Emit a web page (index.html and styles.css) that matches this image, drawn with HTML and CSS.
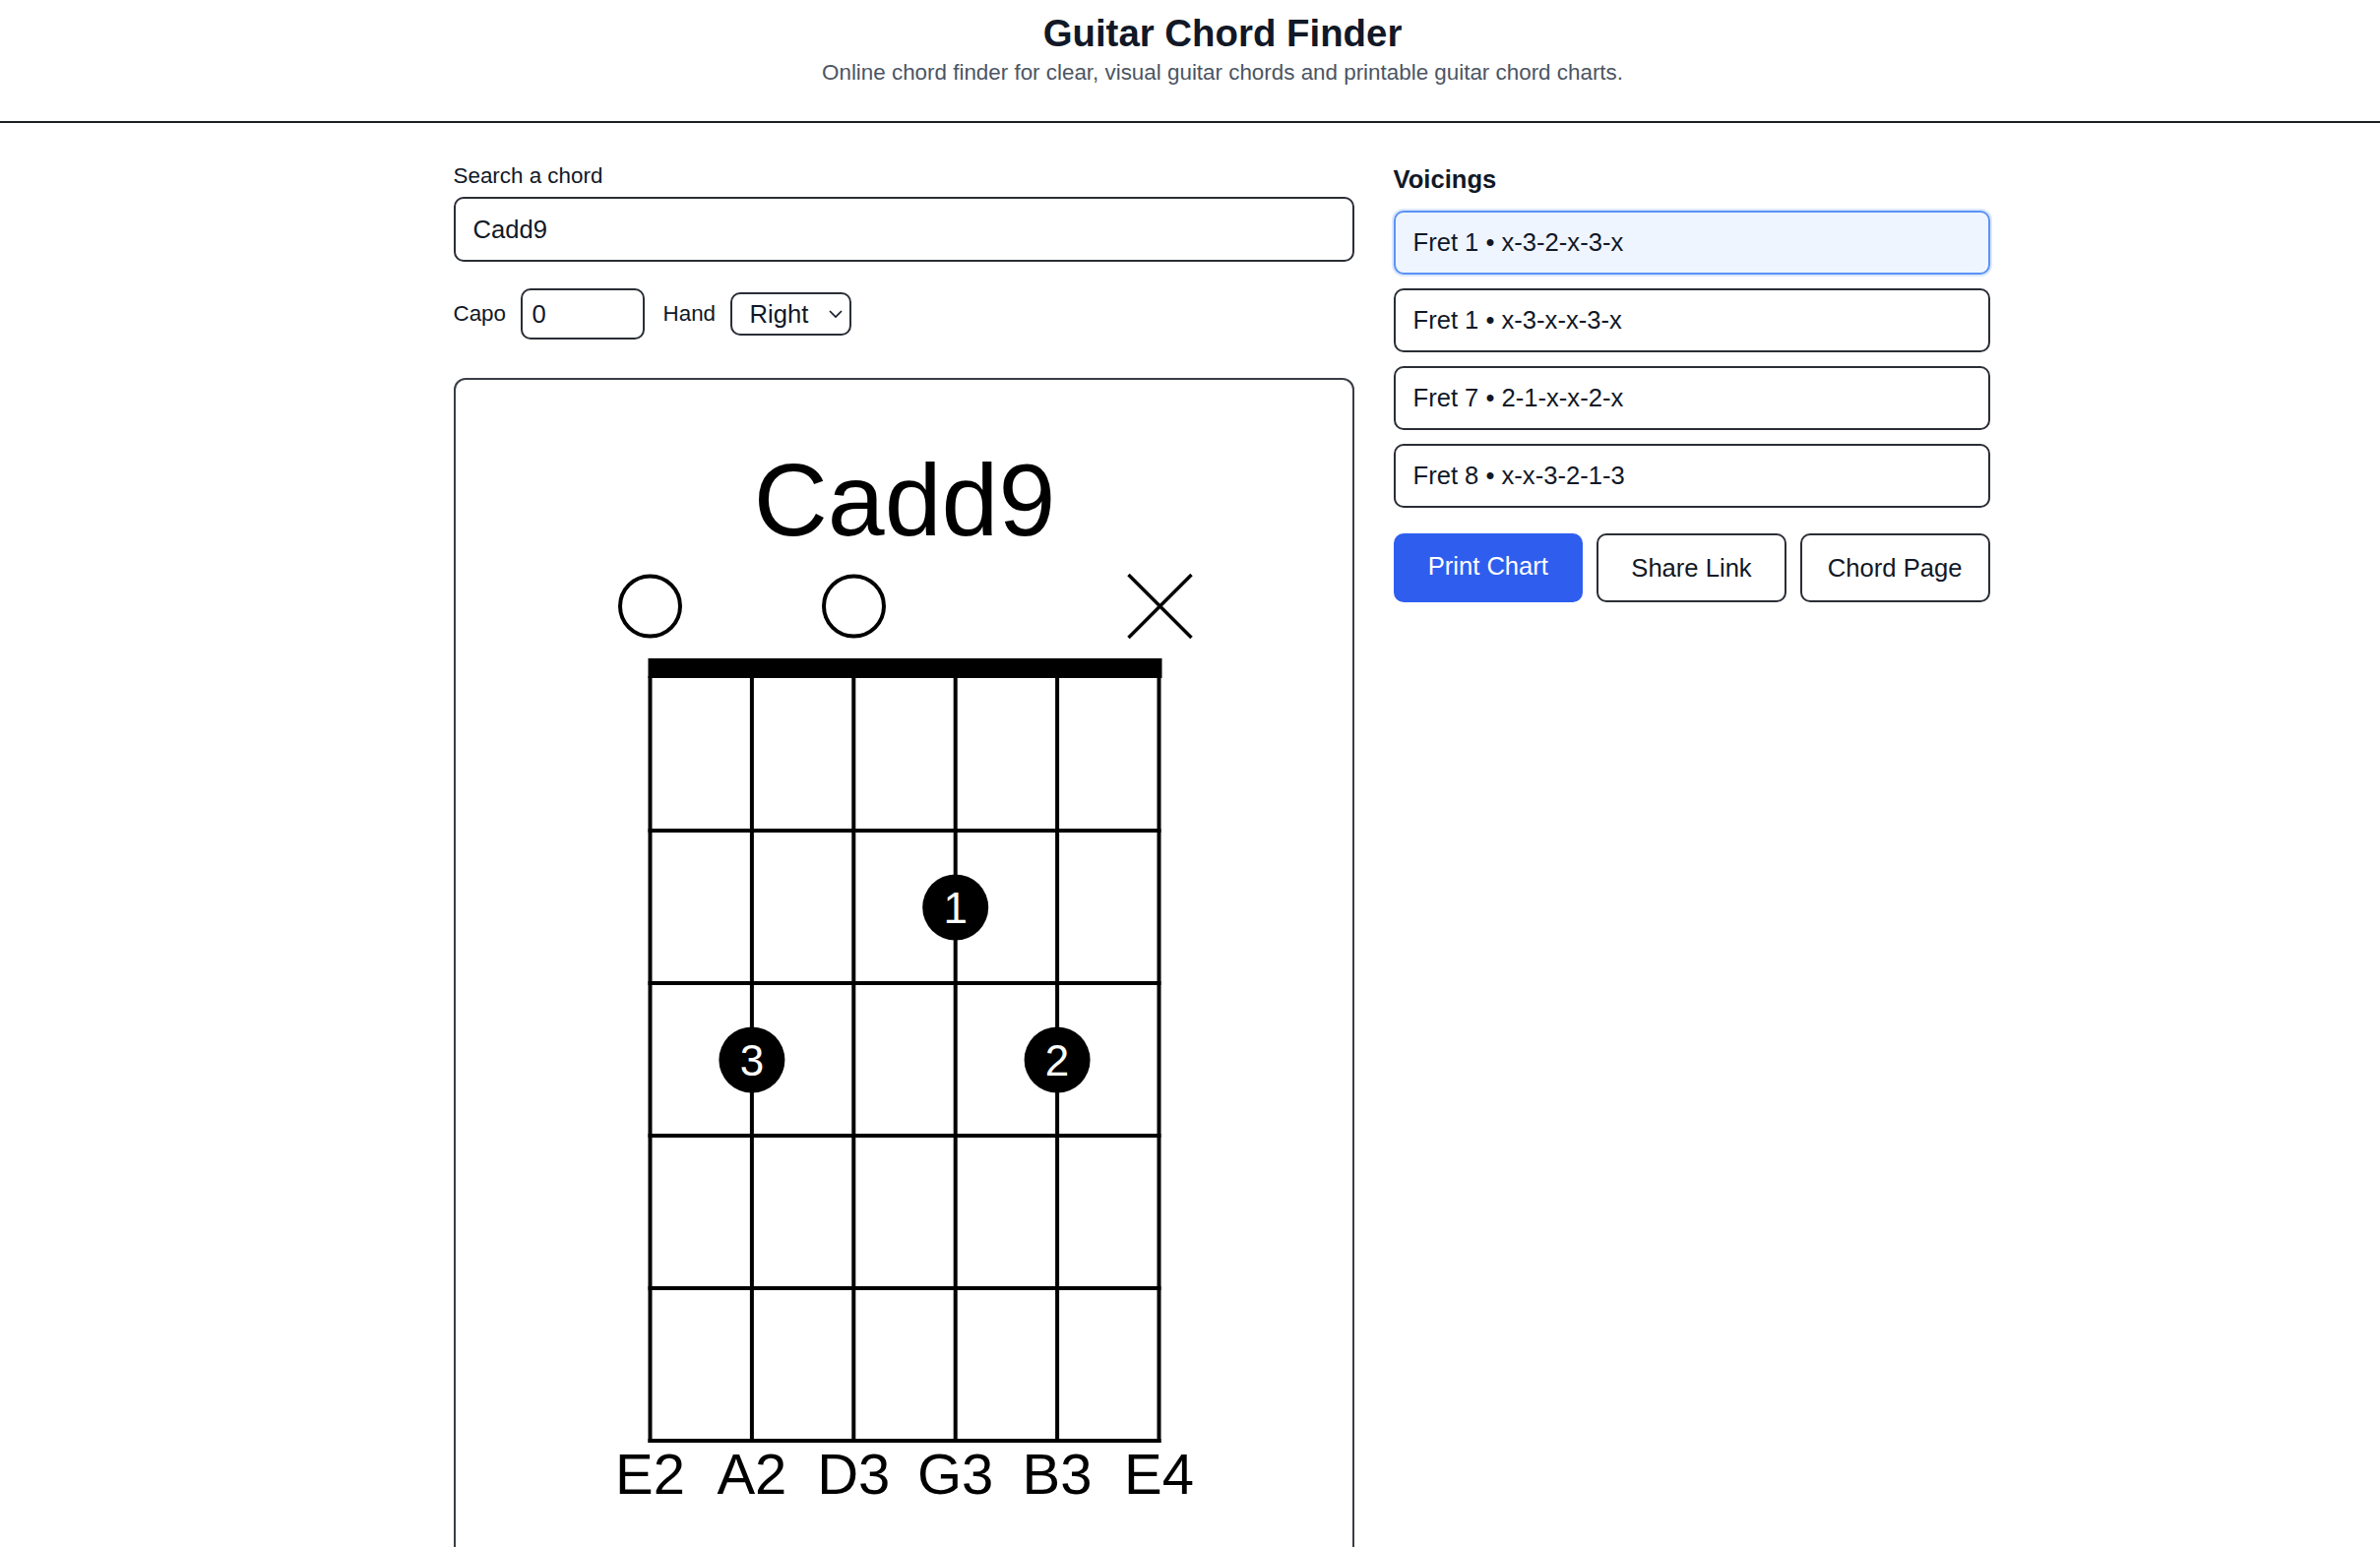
FILE: index.html
```html
<!DOCTYPE html>
<html lang="en">
<head>
<meta charset="utf-8">
<title>Guitar Chord Finder</title>
<link rel="stylesheet" href="styles.css">
</head>
<body>
<header class="site-header">
  <h1 class="site-title">Guitar Chord Finder</h1>
  <p class="site-subtitle">Online chord finder for clear, visual guitar chords and printable guitar chord charts.</p>
</header>
<main class="main">
  <div class="layout">
    <section class="left">
      <label class="field-label" for="chord">Search a chord</label>
      <input class="search-input" id="chord" type="text" value="Cadd9">
      <div class="options">
        <label class="opt"><span class="opt-label">Capo</span><input class="capo-input" type="text" value="0"></label>
        <label class="opt"><span class="opt-label">Hand</span>
          <span class="select-wrap">
            <select class="hand-select"><option>Right</option><option>Left</option></select>
            <svg class="chev" width="16" height="10" viewBox="0 0 16 10"><path d="M2 2 L8 8 L14 2" fill="none" stroke="#111827" stroke-width="1.6"/></svg>
          </span>
        </label>
      </div>
      <div class="card">
        <svg class="chart" width="911" height="1220" viewBox="0 0 911 1220">
          <text x="456" y="158" text-anchor="middle" class="chord-name">Cadd9</text>
          <circle cx="197.5" cy="230" r="30.5" fill="none" stroke="#000" stroke-width="4"/>
          <circle cx="404.5" cy="230" r="30.5" fill="none" stroke="#000" stroke-width="4"/>
          <path d="M683.5 198 L747.5 262 M747.5 198 L683.5 262" stroke="#000" stroke-width="3.5"/>
          <rect x="195.5" y="283" width="522" height="20" fill="#000"/>
          <g stroke="#000" stroke-width="4" stroke-linecap="square">
            <line x1="197.5" y1="303" x2="197.5" y2="1078"/>
            <line x1="300.9" y1="303" x2="300.9" y2="1078"/>
            <line x1="404.3" y1="303" x2="404.3" y2="1078"/>
            <line x1="507.7" y1="303" x2="507.7" y2="1078"/>
            <line x1="611.1" y1="303" x2="611.1" y2="1078"/>
            <line x1="714.5" y1="303" x2="714.5" y2="1078"/>
            <line x1="197.5" y1="458" x2="714.5" y2="458"/>
            <line x1="197.5" y1="613" x2="714.5" y2="613"/>
            <line x1="197.5" y1="768" x2="714.5" y2="768"/>
            <line x1="197.5" y1="923" x2="714.5" y2="923"/>
            <line x1="197.5" y1="1078" x2="714.5" y2="1078"/>
          </g>
          <circle cx="507.7" cy="536" r="33.5" fill="#000"/>
          <text x="507.7" y="552" text-anchor="middle" class="finger">1</text>
          <circle cx="300.9" cy="691" r="33.5" fill="#000"/>
          <text x="300.9" y="707" text-anchor="middle" class="finger">3</text>
          <circle cx="611.1" cy="691" r="33.5" fill="#000"/>
          <text x="611.1" y="707" text-anchor="middle" class="finger">2</text>
          <g class="string-label" text-anchor="middle">
            <text x="197.5" y="1132">E2</text>
            <text x="300.9" y="1132">A2</text>
            <text x="404.3" y="1132">D3</text>
            <text x="507.7" y="1132">G3</text>
            <text x="611.1" y="1132">B3</text>
            <text x="714.5" y="1132">E4</text>
          </g>
        </svg>
      </div>
    </section>
    <aside class="right">
      <h2 class="voicings-title">Voicings</h2>
      <div class="voicings">
        <button class="voicing selected">Fret 1 • x-3-2-x-3-x</button>
        <button class="voicing">Fret 1 • x-3-x-x-3-x</button>
        <button class="voicing">Fret 7 • 2-1-x-x-2-x</button>
        <button class="voicing">Fret 8 • x-x-3-2-1-3</button>
      </div>
      <div class="actions">
        <button class="btn btn-primary">Print Chart</button>
        <button class="btn">Share Link</button>
        <a class="btn" href="#">Chord Page</a>
      </div>
    </aside>
  </div>
</main>
</body>
</html>
```

FILE: styles.css
```css
* { box-sizing: border-box; }
html, body { margin: 0; padding: 0; background: #fff; }
body {
  font-family: "Liberation Sans", Arial, sans-serif;
  color: #111827;
}
.site-header {
  border-bottom: 2px solid #1c1f24;
  padding: 11px 0 34px 66px;
  text-align: center;
}
.site-title {
  margin: 0;
  font-size: 38.4px;
  line-height: 46px;
  font-weight: 700;
  color: #111827;
}
.site-subtitle {
  margin: 2px 0 0;
  font-size: 22.4px;
  line-height: 30px;
  color: #4b5563;
}
.main {
  padding: 39px 0 0 64px;
}
.layout {
  width: 1561px;
  margin: 0 auto;
  display: grid;
  grid-template-columns: 915px 606px;
  column-gap: 40px;
  align-items: start;
}
.field-label {
  display: block;
  font-size: 22.4px;
  line-height: 30px;
  color: #111827;
  margin-bottom: 6px;
}
.search-input {
  display: block;
  width: 100%;
  height: 66px;
  border: 2px solid #2a2e35;
  border-radius: 10px;
  padding: 0 18px;
  font-family: inherit;
  font-size: 25.6px;
  color: #111827;
  background: #fff;
  outline: none;
}
.options {
  display: flex;
  align-items: center;
  gap: 19px;
  margin-top: 27px;
  height: 52px;
}
.opt {
  display: flex;
  align-items: center;
  gap: 14.5px;
}
.opt-label {
  font-size: 22.4px;
  line-height: 30px;
  color: #111827;
}
.capo-input {
  width: 126px;
  height: 52px;
  border: 2px solid #2a2e35;
  border-radius: 10px;
  padding: 0 10px;
  font-family: inherit;
  font-size: 25.6px;
  color: #111827;
  outline: none;
}
.select-wrap {
  position: relative;
  display: inline-block;
}
.hand-select {
  appearance: none;
  -webkit-appearance: none;
  width: 123px;
  height: 44px;
  border: 2px solid #2a2e35;
  border-radius: 10px;
  padding: 0 0 0 18px;
  font-family: inherit;
  font-size: 25.6px;
  color: #111827;
  background: #fff;
  display: block;
}
.chev {
  position: absolute;
  right: 8px;
  top: 17px;
  pointer-events: none;
}
.card {
  margin-top: 39px;
  border: 2px solid #3a3e45;
  border-radius: 12px;
  background: #fff;
  overflow: hidden;
}
.chart { display: block; }
.chord-name {
  font-family: "Liberation Sans", Arial, sans-serif;
  font-size: 104px;
  fill: #000;
}
.finger {
  font-family: "Liberation Sans", Arial, sans-serif;
  font-size: 44px;
  fill: #fff;
}
.string-label text {
  font-family: "Liberation Sans", Arial, sans-serif;
  font-size: 58px;
  fill: #000;
}
.voicings-title {
  margin: 1px 0 15px;
  font-size: 25.6px;
  line-height: 34px;
  font-weight: 700;
  color: #111827;
}
.voicings {
  display: flex;
  flex-direction: column;
  gap: 14px;
}
.voicing {
  display: block;
  width: 100%;
  height: 65px;
  text-align: left;
  padding: 0 18px;
  border: 2px solid #2a2e35;
  border-radius: 10px;
  background: #fff;
  font-family: inherit;
  font-size: 25.6px;
  color: #111827;
}
.voicing.selected {
  background: #eff5ff;
  border-color: #5b93f5;
  box-shadow: 0 0 0 2px rgba(96, 150, 245, 0.22);
}
.actions {
  margin-top: 26px;
  display: grid;
  grid-template-columns: repeat(3, 1fr);
  gap: 14px;
}
.btn {
  display: flex;
  align-items: center;
  justify-content: center;
  height: 70px;
  border: 2px solid #2a2e35;
  border-radius: 10px;
  background: #fff;
  font-family: inherit;
  font-size: 25.6px;
  color: #111827;
  text-decoration: none;
  padding: 0;
}
.btn-primary {
  background: #2f5eef;
  border-color: #2f5eef;
  color: #fff;
  padding-bottom: 3px;
}
```
